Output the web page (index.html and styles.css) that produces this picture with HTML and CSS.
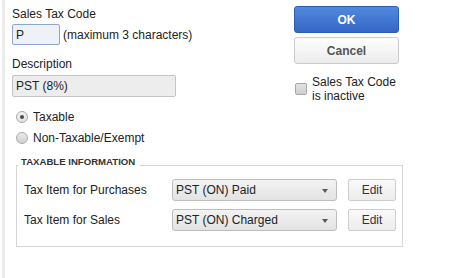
FILE: index.html
```html
<!DOCTYPE html>
<html lang="en">
<head>
  <meta charset="UTF-8">
  <title>Sales Tax Code</title>
  <link rel="stylesheet" href="styles.css">
</head>
<body>
  <div class="frame">
    <div class="top">
      <!-- Left: code, description, taxable choice -->
      <div class="fields">
        <label class="field-label">Sales Tax Code</label>
        <div class="code-row">
          <input class="code-input" type="text" value="P" readonly>
          <span class="hint">(maximum 3 characters)</span>
        </div>

        <label class="field-label desc-label">Description</label>
        <input class="desc-input" type="text" value="PST (8%)" readonly>

        <div class="radios">
          <div class="radio-row">
            <span class="radio checked"></span>
            <span>Taxable</span>
          </div>
          <div class="radio-row">
            <span class="radio"></span>
            <span>Non-Taxable/Exempt</span>
          </div>
        </div>
      </div>

      <!-- Right: actions -->
      <div class="side">
        <button class="btn-ok">OK</button>
        <button class="btn-cancel">Cancel</button>
        <div class="inactive">
          <span class="checkbox"></span>
          <span class="inactive-text">Sales Tax Code<br>is inactive</span>
        </div>
      </div>
    </div>

    <div class="group">
      <div class="group-title">TAXABLE INFORMATION</div>
      <div class="item-row">
        <span class="item-label">Tax Item for Purchases</span>
        <div class="select">PST (ON) Paid</div>
        <button class="btn-edit">Edit</button>
      </div>
      <div class="item-row">
        <span class="item-label">Tax Item for Sales</span>
        <div class="select">PST (ON) Charged</div>
        <button class="btn-edit">Edit</button>
      </div>
    </div>
  </div>
</body>
</html>
```

FILE: styles.css
```css
* {
  margin: 0;
  padding: 0;
  box-sizing: border-box;
}

body {
  font-family: 'Liberation Sans', Arial, sans-serif;
  font-size: 12px;
  line-height: 14px;
  color: #222;
  background: #fff;
}

.frame {
  margin-left: 2px;
  border-left: 3px solid #ececec;
  min-height: 278px;
  padding: 6px 0 0 7px;
}

.top {
  display: grid;
  grid-template-columns: 282px 105px;
}

/* left column */
.fields {
  display: flex;
  flex-direction: column;
  padding-top: 1px;
}

.field-label {
  display: block;
  height: 14px;
}

.code-row {
  display: flex;
  align-items: center;
  gap: 3px;
  margin-top: 3px;
}

.code-input {
  width: 48px;
  height: 21px;
  border: 1px solid #8ea8cc;
  border-radius: 2px;
  background: #eef1f6;
  font: inherit;
  color: #222;
  padding-left: 3px;
  outline: none;
}

.desc-label {
  margin-top: 12px;
}

.desc-input {
  width: 164px;
  height: 22px;
  margin-top: 4px;
  border: 1px solid #c4c4c4;
  border-radius: 2px;
  background: #ededed;
  font: inherit;
  color: #222;
  padding-left: 3px;
  outline: none;
}

.radios {
  margin-top: 9px;
}

.radio-row {
  display: flex;
  align-items: center;
  gap: 5px;
  height: 21px;
  padding-left: 4px;
}

.radio {
  width: 12px;
  height: 12px;
  border-radius: 50%;
  border: 1px solid #a9a9a9;
  background: linear-gradient(#e9e9e9, #d2d2d2);
  display: flex;
  align-items: center;
  justify-content: center;
}

.radio.checked {
  background: linear-gradient(#f4f4f4, #e2e2e2);
}

.radio.checked::after {
  content: '';
  width: 4px;
  height: 4px;
  border-radius: 50%;
  background: #4a4a4a;
}

/* right column */
.side {
  display: flex;
  flex-direction: column;
}

.btn-ok,
.btn-cancel {
  width: 105px;
  height: 27px;
  border-radius: 3px;
  font: bold 12px 'Liberation Sans', Arial, sans-serif;
  cursor: pointer;
}

.btn-ok {
  background: linear-gradient(#5089de, #3566c6);
  border: 1px solid #2d5cb3;
  color: #fff;
}

.btn-cancel {
  margin-top: 4px;
  background: linear-gradient(#fefefe, #ececec);
  border: 1px solid #cbcbcb;
  color: #555;
}

.inactive {
  display: flex;
  align-items: center;
  gap: 5px;
  margin-top: 11px;
  padding-left: 1px;
}

.checkbox {
  width: 12px;
  height: 12px;
  border: 1px solid #a8a8a8;
  border-radius: 2px;
  background: linear-gradient(#e2e2e2, #cfcfcf);
}

/* taxable information box */
.group {
  display: flex;
  flex-direction: column;
  gap: 8px;
  width: 387px;
  margin-top: 17px;
  margin-left: 4px;
  border: 1px solid #d6d6d6;
  padding: 0 6px 15px 7px;
}

.group-title {
  width: max-content;
  margin: -10px 0 3px -6px;
  padding: 0 5px 0 3px;
  background: #fff;
  font-size: 9.6px;
  font-weight: bold;
  line-height: 12px;
  color: #333;
}

.item-row {
  display: flex;
  align-items: center;
  height: 22px;
}

.item-label {
  width: 148px;
}

.select {
  position: relative;
  width: 165px;
  height: 22px;
  line-height: 20px;
  padding-left: 3px;
  border: 1px solid #bdbdbd;
  border-radius: 3px;
  background: linear-gradient(#f3f3f3, #e3e3e3);
}

.select::after {
  content: '';
  position: absolute;
  right: 8px;
  top: 9px;
  border-left: 3px solid transparent;
  border-right: 3px solid transparent;
  border-top: 4px solid #5a5a5a;
}

.btn-edit {
  width: 48px;
  height: 22px;
  margin-left: 11px;
  border: 1px solid #cdcdcd;
  border-radius: 2px;
  background: linear-gradient(#fafafa, #ececec);
  font: 12px 'Liberation Sans', Arial, sans-serif;
  color: #333;
  cursor: pointer;
}
```
